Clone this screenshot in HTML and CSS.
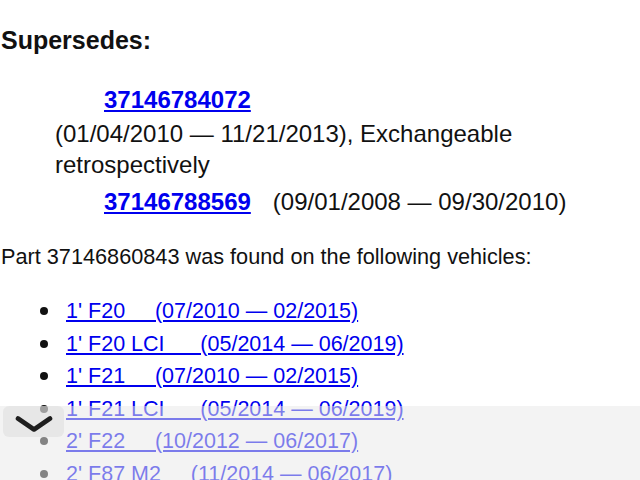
FILE: index.html
```html
<!DOCTYPE html>
<html>
<head>
<meta charset="utf-8">
<link rel="stylesheet" href="styles.css">
</head>
<body>
<div class="page">
  <h2 class="title">Supersedes:</h2>
  <div class="supersedes">
    <div class="item"><a class="part" href="#">37146784072</a><span class="dates">(01/04/2010 — 11/21/2013), Exchangeable retrospectively</span></div>
    <div class="item"><a class="part" href="#">37146788569</a><span class="dates">(09/01/2008 — 09/30/2010)</span></div>
  </div>
  <p class="found">Part 37146860843 was found on the following vehicles:</p>
  <ul class="vehicles">
    <li><a href="#">1' F20&nbsp;&nbsp;&nbsp;&nbsp;&nbsp;(07/2010 — 02/2015) </a></li>
    <li><a href="#">1' F20 LCI&nbsp;&nbsp;&nbsp;&nbsp;&nbsp;&nbsp;(05/2014 — 06/2019) </a></li>
    <li><a href="#">1' F21&nbsp;&nbsp;&nbsp;&nbsp;&nbsp;(07/2010 — 02/2015) </a></li>
    <li><a href="#">1' F21 LCI&nbsp;&nbsp;&nbsp;&nbsp;&nbsp;&nbsp;(05/2014 — 06/2019) </a></li>
    <li><a href="#">2' F22&nbsp;&nbsp;&nbsp;&nbsp;&nbsp;(10/2012 — 06/2017) </a></li>
    <li><a href="#">2' F87 M2&nbsp;&nbsp;&nbsp;&nbsp;&nbsp;(11/2014 — 06/2017) </a></li>
  </ul>
</div>
<div class="toolbar">
  <button class="collapse" aria-label="Collapse">
    <svg width="38" height="18" viewBox="0 0 38 18"><path d="M3 3.5 L19 14.5 L35 3.5" fill="none" stroke="#1e1e1e" stroke-width="4.6" stroke-linecap="round" stroke-linejoin="round"/></svg>
  </button>
</div>
</body>
</html>
```
FILE: styles.css
```css
html, body {
  margin: 0;
  padding: 0;
  background: #fff;
  overflow: hidden;
}
body {
  font-family: "Liberation Sans", Arial, Helvetica, sans-serif;
  color: #111;
}
.page {
  padding: 0 0 0 1px;
}
.title {
  font-size: 25px;
  font-weight: bold;
  line-height: 28px;
  margin: 26px 0 0 0;
}
.supersedes {
  font-size: 24px;
  line-height: 31px;
  padding: 30px 40px 0 54px;
}
.item {
  margin-bottom: 3px;
}
.part {
  color: #0000ee;
  font-weight: bold;
  margin-left: 49px;
  margin-right: 22px;
}
.dates {
  display: inline-block;
  margin-top: 3px;
}
.found {
  font-size: 21.7px;
  line-height: 28px;
  margin: 26px 0 0 0;
}
.vehicles {
  font-size: 21.5px;
  line-height: 32.5px;
  margin: 24px 0 0 0;
  padding: 0 0 0 39px;
}
.vehicles li {
  list-style: none;
  display: flex;
  align-items: center;
  gap: 18px;
}
.vehicles li::before {
  content: "";
  width: 8px;
  height: 8px;
  border-radius: 50%;
  background: #111;
  flex: none;
}
.vehicles a {
  color: #0000ee;
}
.toolbar {
  position: fixed;
  left: 0;
  right: 0;
  bottom: 0;
  height: 74px;
  background: rgba(232, 232, 232, 0.53);
}
.collapse {
  position: absolute;
  left: 3px;
  top: 0;
  width: 61px;
  height: 31px;
  border: 0;
  border-radius: 6px;
  background: rgba(210, 210, 210, 0.35);
  padding: 0;
  display: flex;
  align-items: center;
  justify-content: center;
}
.collapse svg {
  display: block;
  margin-top: 4px;
}
```
